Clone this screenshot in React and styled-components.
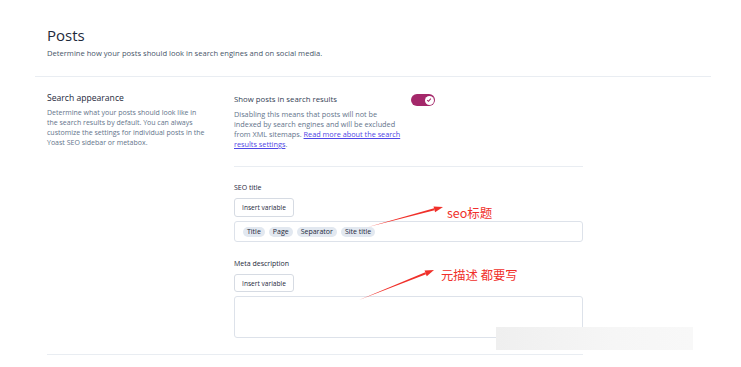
import React from "react"
import styled, { createGlobalStyle } from "styled-components"

const GlobalStyle = createGlobalStyle`
    body {
        margin: 0;
        background: #ffffff;
        font-family: "Open Sans", "Noto Sans CJK SC", sans-serif;
        color: #1e293b;
    }
`

const Page = styled.div`
    position: relative;
    width: 741px;
    height: 367px;
    overflow: hidden;
    background: #ffffff;
`

const Header = styled.header`
    margin-left: 35px;
    width: 676px;
    padding: 25px 12px 0;
    box-sizing: border-box;
    height: 77px;
    border-bottom: 1px solid #e9edf2;
`

const Title = styled.h1`
    margin: 0;
    font-size: 15px;
    line-height: 20px;
    font-weight: 400;
    color: #1e293b;
`

const Subtitle = styled.p`
    margin: 2px 0 0;
    font-size: 7.6px;
    line-height: 12px;
    color: #475569;
`

const Section = styled.section`
    margin-left: 47px;
    width: 536px;
    display: grid;
    grid-template-columns: 187px 1fr;
    padding: 15px 0 16px;
    border-bottom: 1px solid #e9edf2;
`

const SideTitle = styled.h2`
    margin: 0;
    font-size: 8.6px;
    line-height: 12px;
    font-weight: 400;
    color: #1e293b;
`

const SideText = styled.p`
    margin: 4px 0 0;
    width: 158px;
    font-size: 7px;
    line-height: 10px;
    color: #64748b;
`

const Fields = styled.div`
    display: flex;
    flex-direction: column;
`

const ToggleRow = styled.div`
    display: flex;
    align-items: flex-start;
    justify-content: space-between;
    padding: 2px 148px 17px 0;
    border-bottom: 1px solid #e9edf2;
`

const ToggleText = styled.div`
    width: 170px;
`

const Label = styled.div`
    font-size: 7.8px;
    line-height: 11px;
    color: #334155;
`

const Help = styled.p`
    margin: 4px 0 0;
    font-size: 7.3px;
    line-height: 10px;
    color: #64748b;
`

const Link = styled.a`
    color: #4f46e5;
    text-decoration: underline;
`

const Switch = styled.div`
    width: 24px;
    height: 12px;
    border-radius: 6px;
    background: #a4286a;
    display: flex;
    align-items: center;
    justify-content: flex-end;
    padding: 0 1.5px;
    box-sizing: border-box;
`

const Knob = styled.div`
    width: 9px;
    height: 9px;
    border-radius: 50%;
    background: #ffffff;
    display: flex;
    align-items: center;
    justify-content: center;
`

const Field = styled.div`
    display: flex;
    flex-direction: column;
    align-items: flex-start;
    margin-top: ${p => p.top}px;
`

const FieldLabel = styled.div`
    font-size: 7px;
    line-height: 10px;
    color: #1e293b;
    margin-bottom: 5px;
`

const VarButton = styled.button`
    height: ${p => p.h}px;
    width: 60px;
    padding: 0;
    border: 1px solid #d6dbe3;
    border-radius: 3px;
    background: #ffffff;
    font-family: inherit;
    font-size: 6.6px;
    color: #1e293b;
    margin-bottom: 4px;
`

const Input = styled.div`
    width: 349px;
    height: ${p => p.h}px;
    box-sizing: border-box;
    border: 1px solid #dde2ea;
    border-radius: 3px;
    display: flex;
    align-items: center;
    gap: 4px;
    padding: 0 8px;
`

const Pill = styled.span`
    height: 10px;
    padding: 0 4px;
    border-radius: 5px;
    background: #e2e8f0;
    font-size: 7px;
    line-height: 10px;
    color: #1e293b;
`

const Overlay = styled.svg`
    position: absolute;
    left: 0;
    top: 0;
    pointer-events: none;
`

const Note = styled.div`
    position: absolute;
    left: ${p => p.x}px;
    top: ${p => p.y}px;
    font-family: "Noto Sans CJK SC", "Open Sans", sans-serif;
    font-size: ${p => p.size}px;
    line-height: 14px;
    color: #f0302a;
    white-space: nowrap;
`

const Smudge = styled.div`
    position: absolute;
    left: 496px;
    top: 327px;
    width: 197px;
    height: 23px;
    background: linear-gradient(90deg, #efefef, #f6f6f6 60%, #f8f8f8);
    filter: blur(0.6px);
`

function Arrow({ x1, y1, x2, y2 }) {
    const a = Math.atan2(y2 - y1, x2 - x1)
    const l = 9
    const w = 3
    const bx = x2 - l * Math.cos(a)
    const by = y2 - l * Math.sin(a)
    const px = -Math.sin(a) * w
    const py = Math.cos(a) * w
    return (
        <g>
            <polygon
                points={`${x1},${y1} ${bx + px * 0.35},${by + py * 0.35} ${bx - px * 0.35},${by - py * 0.35}`}
                fill="#f0302a"
            />
            <polygon points={`${x2},${y2} ${bx + px},${by + py} ${bx - px},${by - py}`} fill="#f0302a" />
        </g>
    )
}

export default function App() {
    return (
        <Page>
            <GlobalStyle />
            <Header>
                <Title>Posts</Title>
                <Subtitle>Determine how your posts should look in search engines and on social media.</Subtitle>
            </Header>
            <Section>
                <div>
                    <SideTitle>Search appearance</SideTitle>
                    <SideText>
                        Determine what your posts should look like in the search results by default. You can always
                        customize the settings for individual posts in the Yoast SEO sidebar or metabox.
                    </SideText>
                </div>
                <Fields>
                    <ToggleRow>
                        <ToggleText>
                            <Label>Show posts in search results</Label>
                            <Help>
                                Disabling this means that posts will not be indexed by search engines and will be
                                excluded from XML sitemaps. <Link>Read more about the search results settings</Link>.
                            </Help>
                        </ToggleText>
                        <Switch>
                            <Knob>
                                <svg width="6" height="6" viewBox="0 0 10 10">
                                    <path d="M2 5.2 L4.2 7.2 L8 2.8" fill="none" stroke="#a4286a" strokeWidth="1.8" />
                                </svg>
                            </Knob>
                        </Switch>
                    </ToggleRow>
                    <Field top={16}>
                        <FieldLabel>SEO title</FieldLabel>
                        <VarButton h={19}>Insert variable</VarButton>
                        <Input h={21}>
                            <Pill>Title</Pill>
                            <Pill>Page</Pill>
                            <Pill>Separator</Pill>
                            <Pill>Site title</Pill>
                        </Input>
                    </Field>
                    <Field top={17}>
                        <FieldLabel>Meta description</FieldLabel>
                        <VarButton h={18}>Insert variable</VarButton>
                        <Input h={42} />
                    </Field>
                </Fields>
            </Section>
            <Smudge />
            <Overlay width="741" height="367">
                <Arrow x1={368} y1={227} x2={443} y2={207} />
                <Arrow x1={359} y1={300} x2={434} y2={270} />
            </Overlay>
            <Note x={447} y={206} size={12.5}>seo标题</Note>
            <Note x={441} y={268} size={12.3}>元描述 都要写</Note>
        </Page>
    )
}
